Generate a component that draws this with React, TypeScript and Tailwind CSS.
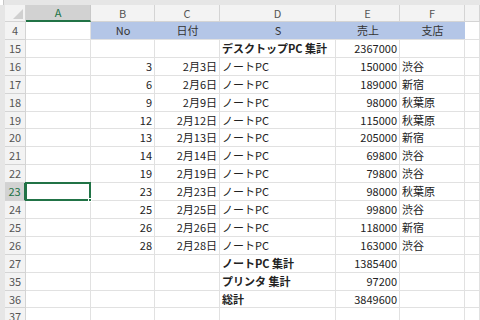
const cols = "grid-cols-[5px_21px_65px_64px_65px_116px_64px_65px_1fr]";

type Row = {
  n: number;
  h: string;
  b?: string;
  c?: string;
  d?: string;
  e?: string;
  f?: string;
  bold?: boolean;
  head?: boolean;
};

const rows: Row[] = [
  { n: 4, h: "h-[18px]", b: "No", c: "日付", d: "S", e: "売上", f: "支店", head: true },
  { n: 15, h: "h-[18px]", d: "デスクトップPC 集計", e: "2367000", bold: true },
  { n: 16, h: "h-[18px]", b: "3", c: "2月3日", d: "ノートPC", e: "150000", f: "渋谷" },
  { n: 17, h: "h-[18px]", b: "6", c: "2月6日", d: "ノートPC", e: "189000", f: "新宿" },
  { n: 18, h: "h-[18px]", b: "9", c: "2月9日", d: "ノートPC", e: "98000", f: "秋葉原" },
  { n: 19, h: "h-[17px]", b: "12", c: "2月12日", d: "ノートPC", e: "115000", f: "秋葉原" },
  { n: 20, h: "h-[18px]", b: "13", c: "2月13日", d: "ノートPC", e: "205000", f: "新宿" },
  { n: 21, h: "h-[18px]", b: "14", c: "2月14日", d: "ノートPC", e: "69800", f: "渋谷" },
  { n: 22, h: "h-[18px]", b: "19", c: "2月19日", d: "ノートPC", e: "79800", f: "渋谷" },
  { n: 23, h: "h-[18px]", b: "23", c: "2月23日", d: "ノートPC", e: "98000", f: "秋葉原" },
  { n: 24, h: "h-[18px]", b: "25", c: "2月25日", d: "ノートPC", e: "99800", f: "渋谷" },
  { n: 25, h: "h-[18px]", b: "26", c: "2月26日", d: "ノートPC", e: "118000", f: "新宿" },
  { n: 26, h: "h-[18px]", b: "28", c: "2月28日", d: "ノートPC", e: "163000", f: "渋谷" },
  { n: 27, h: "h-[18px]", d: "ノートPC 集計", e: "1385400", bold: true },
  { n: 35, h: "h-[18px]", d: "プリンタ 集計", e: "97200", bold: true },
  { n: 36, h: "h-[17px]", d: "総計", e: "3849600", bold: true },
  { n: 37, h: "h-[18px]" },
];

const cell = "border-r border-b border-[#e1e1e1] px-[2px] flex items-center overflow-hidden whitespace-nowrap";

function DataRow({ row }: { row: Row }) {
  const selected = row.n === 23;
  if (row.head) {
    return (
      <div className={`grid ${cols} ${row.h}`}>
        <div className="bg-[#e6e6e6]" />
        <div className="bg-[#f3f3f3] border-r border-b border-[#d4d4d4] flex items-center justify-center text-[#555]">
          {row.n}
        </div>
        <div className={cell} />
        <div className="col-span-5 bg-[#b4c6e7] border-b border-[#e1e1e1] grid grid-cols-[64px_65px_116px_64px_65px] text-[#333]">
          <div className="flex items-center justify-center">{row.b}</div>
          <div className="flex items-center justify-center">{row.c}</div>
          <div className="flex items-center justify-center">{row.d}</div>
          <div className="flex items-center justify-center">{row.e}</div>
          <div className="flex items-center justify-center">{row.f}</div>
        </div>
        <div className={cell} />
      </div>
    );
  }
  return (
    <div className={`grid ${cols} ${row.h}`}>
      <div className="bg-[#e6e6e6]" />
      <div
        className={`border-b border-[#d4d4d4] flex items-center justify-center ${
          selected
            ? "bg-[#d2d2d2] text-[#217346] border-r-2 border-r-[#217346]"
            : "bg-[#f3f3f3] text-[#555] border-r"
        }`}
      >
        {row.n}
      </div>
      {selected ? (
        <div className="relative border-2 border-[#217346] -mt-px -ml-px">
          <div className="absolute -right-[3px] -bottom-[3px] w-[4px] h-[4px] bg-[#217346] border border-white" />
        </div>
      ) : (
        <div className={cell} />
      )}
      <div className={`${cell} justify-end`}>{row.b}</div>
      <div className={`${cell} justify-end`}>{row.c}</div>
      <div className={`${cell} ${row.bold ? "font-bold" : ""}`}>{row.d}</div>
      <div className={`${cell} justify-end`}>{row.e}</div>
      <div className={cell}>{row.f}</div>
      <div className={cell} />
    </div>
  );
}

export default function App() {
  const letters = ["A", "B", "C", "D", "E", "F", ""];
  return (
    <div
      className="w-[480px] h-[320px] overflow-hidden bg-white text-[11px] text-[#222] leading-none"
      style={{ fontFamily: '"Noto Sans CJK JP", "Noto Sans", sans-serif' }}
    >
      {/* top strip */}
      <div className="h-[5px] bg-[#e6e6e6] flex">
        <div className="w-[4px] bg-white border-r border-[#c8c8c8]" />
      </div>

      {/* column headers */}
      <div className={`grid ${cols} h-[17px]`}>
        <div className="bg-[#e6e6e6]" />
        <div className="relative bg-[#f3f3f3] border-r border-b border-[#d4d4d4]">
          <div className="absolute right-[2px] bottom-[2px] w-0 h-0 border-l-[10px] border-l-transparent border-b-[10px] border-b-[#d0d0d0]" />
        </div>
        {letters.map((l, i) =>
          i === 0 ? (
            <div
              key={i}
              className="bg-[#d2d2d2] border-r border-[#c8c8c8] border-b-2 border-b-[#217346] flex items-center justify-center text-[#217346]"
            >
              {l}
            </div>
          ) : (
            <div
              key={i}
              className="bg-[#f3f3f3] border-r border-b border-[#d4d4d4] flex items-center justify-center text-[#555]"
            >
              {l}
            </div>
          )
        )}
      </div>

      {rows.map((r) => (
        <DataRow key={r.n} row={r} />
      ))}
    </div>
  );
}
